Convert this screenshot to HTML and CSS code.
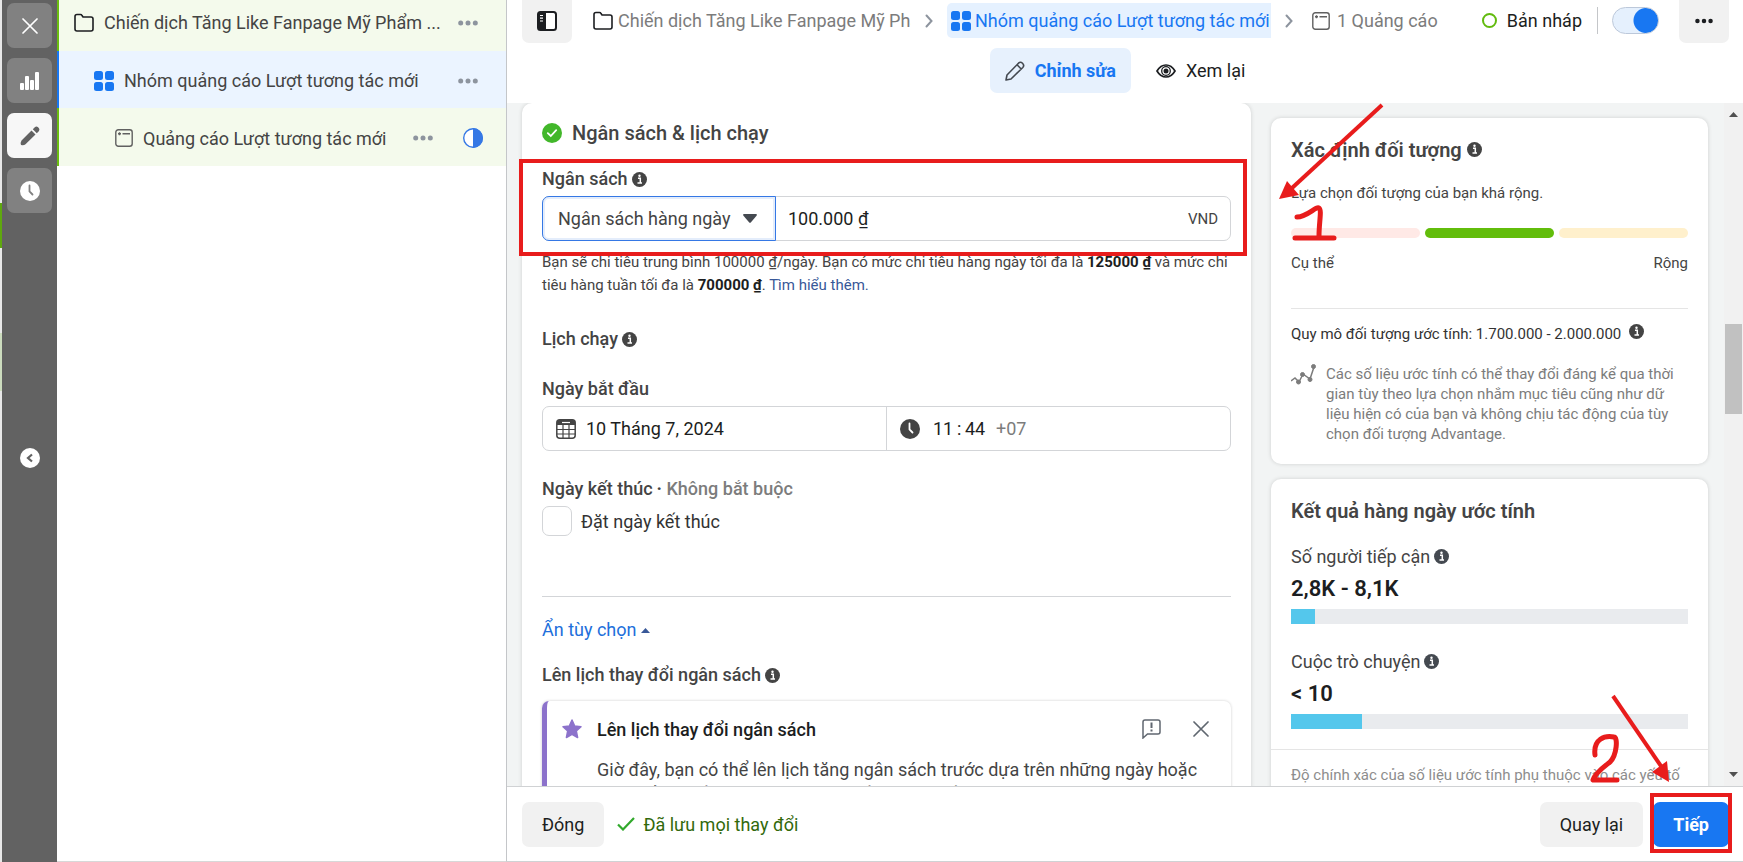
FILE: index.html
```
<!DOCTYPE html>
<html lang="vi">
<head>
  <meta charset="UTF-8">
  <meta name="viewport" content="width=device-width, initial-scale=1.0">
  <title>Nhóm quảng cáo Lượt tương tác mới</title>
  <link rel="stylesheet" href="styles.css">
</head>
<body>
  <!-- shared icons -->
  <svg class="defs" width="0" height="0" aria-hidden="true">
    <symbol id="i-folder" viewBox="0 0 20 20"><path d="M1 4V3.500Q1 1.500 3 1.500H6.500Q7.500 1.500 8 2.500L9 4H17Q19 4 19 6V16Q19 18 17 18H3Q1 18 1 16Z" fill="none" stroke="currentColor" stroke-width="1.600"/></symbol>
    <symbol id="i-grid" viewBox="0 0 20 20"><g fill="currentColor"><rect width="9" height="9" rx="2.500"/><rect x="11" width="9" height="9" rx="2.500"/><rect y="11" width="9" height="9" rx="2.500"/><rect x="11" y="11" width="9" height="9" rx="2.500"/></g></symbol>
    <symbol id="i-ad" viewBox="0 0 18 18"><rect x=".8" y=".8" width="16.400" height="16.400" rx="2.500" fill="none" stroke="currentColor" stroke-width="1.400"/><path d="M3 4.800H6M4.500 3.300V6.300M7.500 4.800H15" stroke="currentColor" stroke-width="1.400"/></symbol>
    <symbol id="i-dots" viewBox="0 0 20 6"><g fill="currentColor"><circle cx="2.700" cy="3" r="2.500"/><circle cx="10" cy="3" r="2.500"/><circle cx="17.300" cy="3" r="2.500"/></g></symbol>
    <symbol id="i-info" viewBox="0 0 15 15"><circle cx="7.500" cy="7.500" r="7.500" fill="currentColor"/><path d="M6 6.200H8.300V11M5.500 11H10" fill="none" stroke="#fff" stroke-width="1.500"/><circle cx="7.500" cy="3.700" r="1.200" fill="#fff"/></symbol>
    <symbol id="i-clock" viewBox="0 0 20 20"><circle cx="10" cy="10" r="10" fill="currentColor"/><path d="M9.500 4.500V10.500L12.500 13.500" fill="none" stroke="var(--hand, #fff)" stroke-width="1.800" stroke-linecap="round"/></symbol>
    <symbol id="i-x" viewBox="0 0 16 16"><path d="M1 1 15 15M15 1 1 15" stroke="currentColor" stroke-width="1.700" stroke-linecap="round"/></symbol>
    <symbol id="i-chevron" viewBox="0 0 8 14"><path d="M1.500 1.500 6.500 7 1.500 12.500" fill="none" stroke="currentColor" stroke-width="2" stroke-linecap="round"/></symbol>
  </svg>

  <div class="app">
    <div class="page-edge"></div>

    <nav class="rail">
      <button class="rail-btn" aria-label="Đóng"><svg width="16" height="16"><use href="#i-x"/></svg></button>
      <button class="rail-btn" aria-label="Biểu đồ">
        <svg width="19" height="18" viewBox="0 0 19 18" fill="currentColor"><rect y="11" width="4" height="7" rx="1"/><rect x="5" y="4" width="4" height="14" rx="1"/><rect x="10" y="8" width="4" height="10" rx="1"/><rect x="15" width="4" height="18" rx="1"/></svg>
      </button>
      <button class="rail-btn active" aria-label="Chỉnh sửa">
        <svg width="20" height="20" viewBox="0 0 20 20" fill="currentColor"><path d="M1 19Q0 17 1.500 14.500L11.500 4.500 15.500 8.500 5.500 18.200Q4 19.500 1 19ZM12.800 3.200 14.800 1.200Q16.300 0 17.800 1L19 2.200Q20 3.700 18.800 5.200L16.800 7.200Z"/></svg>
      </button>
      <button class="rail-btn" aria-label="Lịch sử"><svg width="20" height="20"><use href="#i-clock"/></svg></button>
      <button class="rail-collapse" aria-label="Thu gọn">
        <svg width="20" height="20" viewBox="0 0 20 20"><circle cx="10" cy="10" r="10" fill="#fff"/><path d="M12 6.500 8 10 12 13.500" fill="none" stroke="#626262" stroke-width="2.200"/></svg>
      </button>
    </nav>

    <aside class="tree">
      <div class="tree-row">
        <svg class="ink" width="20" height="20"><use href="#i-folder"/></svg>
        <span class="tree-name">Chiến dịch Tăng Like Fanpage Mỹ Phẩm ...</span>
        <button class="dots" aria-label="Thêm"><svg width="20" height="6"><use href="#i-dots"/></svg></button>
      </div>
      <div class="tree-row level-2 selected">
        <svg class="blue" width="20" height="20"><use href="#i-grid"/></svg>
        <span class="tree-name">Nhóm quảng cáo Lượt tương tác mới</span>
        <button class="dots" aria-label="Thêm"><svg width="20" height="6"><use href="#i-dots"/></svg></button>
      </div>
      <div class="tree-row level-3">
        <svg class="ad-icon" width="18" height="18"><use href="#i-ad"/></svg>
        <span class="tree-name">Quảng cáo Lượt tương tác mới</span>
        <button class="dots" aria-label="Thêm"><svg width="20" height="6"><use href="#i-dots"/></svg></button>
        <svg class="half" width="20" height="20" viewBox="0 0 20 20"><circle cx="10" cy="10" r="9.300" fill="#fff" stroke="#3578e5" stroke-width="1.400"/><path d="M10 0A10 10 0 0 1 10 20Z" fill="#3578e5"/></svg>
      </div>
    </aside>

    <main class="editor">
      <header class="topbar">
        <div class="crumbs">
          <button class="square-btn" aria-label="Bảng điều hướng">
            <svg width="20" height="20" viewBox="0 0 20 20"><rect x="1" y="1" width="18" height="18" rx="2.500" fill="#fff" stroke="#1c1e21" stroke-width="2"/><path d="M1 1H9V19H1Z" fill="#1c1e21"/><path d="M3 4.500H6M3 7.200H6M3 10H6" stroke="#fff" stroke-width="1.200"/></svg>
          </button>
          <a class="crumb first" href="#"><svg class="ink" width="20" height="20"><use href="#i-folder"/></svg><span class="crumb-text">Chiến dịch Tăng Like Fanpage Mỹ Phẩm</span></a>
          <svg class="sep" width="8" height="14"><use href="#i-chevron"/></svg>
          <a class="crumb current" href="#"><svg width="20" height="20"><use href="#i-grid"/></svg><span class="crumb-text">Nhóm quảng cáo Lượt tương tác mới</span></a>
          <svg class="sep" width="8" height="14"><use href="#i-chevron"/></svg>
          <a class="crumb last" href="#"><svg class="ad-icon" width="18" height="18"><use href="#i-ad"/></svg><span class="crumb-text">1 Quảng cáo</span></a>
          <span class="status"><i class="ring"></i>Bản nháp</span>
          <label class="toggle"><input type="checkbox" checked aria-label="Bật nhóm quảng cáo"></label>
          <button class="square-btn" aria-label="Thêm"><svg width="18" height="6"><use href="#i-dots"/></svg></button>
        </div>
        <div class="tabs">
          <button class="tab active">
            <svg width="20" height="20" viewBox="0 0 20 20" fill="none" stroke="#444950" stroke-width="1.600" stroke-linejoin="round"><path d="M1 19 2 14 13.500 2.200Q15.500 .3 17.500 2.300 19.700 4.500 17.800 6.500L6 18ZM12 3.800 16.200 8"/></svg>
            Chỉnh sửa
          </button>
          <button class="tab">
            <svg width="20" height="14" viewBox="0 0 20 14"><path d="M1 7Q4.500 1 10 1T19 7Q15.500 13 10 13T1 7Z" fill="none" stroke="#1c1e21" stroke-width="1.700"/><circle cx="10" cy="7" r="4.300" fill="none" stroke="#1c1e21" stroke-width="1.300"/><circle cx="10" cy="7" r="2.500" fill="#1c1e21"/></svg>
            Xem lại
          </button>
        </div>
      </header>

      <div class="workspace">
        <section class="card form-card">
          <h2 class="section-title">
            <svg width="20" height="20" viewBox="0 0 20 20"><circle cx="10" cy="10" r="10" fill="#42b72a"/><path d="M5.800 10.200 8.800 13 14.200 7.200" fill="none" stroke="#fff" stroke-width="1.800" stroke-linecap="round"/></svg>
            Ngân sách &amp; lịch chạy
          </h2>

          <label class="field-label budget-label" for="budget-type">Ngân sách <svg width="15" height="15"><use href="#i-info"/></svg></label>
          <div class="budget">
            <div class="select-wrap">
              <select id="budget-type">
                <option>Ngân sách hàng ngày</option>
                <option>Ngân sách trọn đời</option>
              </select>
              <svg width="14" height="9" viewBox="0 0 14 9"><path d="M1 0H13Q14.500 .3 13.500 1.700L8 8.300Q7 9.300 6 8.300L.5 1.700Q-.5 .3 1 0Z" fill="#444950"/></svg>
            </div>
            <input id="budget-value" type="text" value="100.000 ₫" aria-label="Số tiền">
            <span class="unit">VND</span>
          </div>
          <p class="hint">Bạn sẽ chi tiêu trung bình 100000 ₫/ngày. Bạn có mức chi tiêu hàng ngày tối đa là <b>125000 ₫</b> và mức chi tiêu hàng tuần tối đa là <b>700000 ₫</b>. <a href="#">Tìm hiểu thêm.</a></p>

          <h3 class="field-label schedule-label">Lịch chạy <svg width="15" height="15"><use href="#i-info"/></svg></h3>

          <label class="field-label start-label" for="start-date">Ngày bắt đầu</label>
          <div class="datetime">
            <div class="date-part">
              <svg width="20" height="20" viewBox="0 0 20 20"><rect x=".8" y=".8" width="18.400" height="18.400" rx="3" fill="#fff" stroke="#444" stroke-width="1.500"/><path d="M1 6V3Q1 1 3 1H17Q19 1 19 3V6Z" fill="#444"/><path d="M6 3.500H14" stroke="#fff" stroke-width="1.200"/><path d="M1 10.500H19M1 15H19M7 6V19M13 6V19" stroke="#444" stroke-width="1.200"/></svg>
              <input id="start-date" type="text" value="10 Tháng 7, 2024">
            </div>
            <div class="time-part">
              <svg class="ink-soft" width="20" height="20"><use href="#i-clock"/></svg>
              <input type="text" value="11&thinsp;:&thinsp;44" aria-label="Giờ bắt đầu">
              <span class="zone">+07</span>
            </div>
          </div>

          <h3 class="field-label end-label">Ngày kết thúc <span class="optional"><b>·</b> Không bắt buộc</span></h3>
          <label class="check"><input type="checkbox">Đặt ngày kết thúc</label>

          <a class="toggle-options" href="#">Ẩn tùy chọn <svg width="9" height="5" viewBox="0 0 9 5"><path d="M0 5 4.500 0 9 5Z" fill="#385898"/></svg></a>

          <h3 class="field-label change-label">Lên lịch thay đổi ngân sách <svg width="15" height="15"><use href="#i-info"/></svg></h3>
          <div class="notice">
            <svg class="star" width="20" height="20" viewBox="0 0 20 20"><path d="M10 1 12.700 7 19 7.700 14.300 12 15.600 18.500 10 15.300 4.400 18.500 5.700 12 1 7.700 7.300 7Z" fill="#8c72cb" stroke="#8c72cb" stroke-width="1.500" stroke-linejoin="round"/></svg>
            <div class="notice-body">
              <div class="notice-head">
                <h4>Lên lịch thay đổi ngân sách</h4>
                <button aria-label="Phản hồi"><svg width="19" height="20" viewBox="0 0 19 20" fill="none" stroke="#606770" stroke-width="1.500"><path d="M1 19V3Q1 1 3 1H16Q18 1 18 3V13Q18 15 16 15H5.500Z"/><path d="M9.500 3.500V9M9.500 10.500V12.500" stroke-width="2"/></svg></button>
                <button aria-label="Đóng"><svg width="16" height="16"><use href="#i-x"/></svg></button>
              </div>
              <p>Giờ đây, bạn có thể lên lịch tăng ngân sách trước dựa trên những ngày hoặc thời điểm nhất định mà bạn dự kiến sẽ có nhiều cơ hội bán hàng, lượng người truy cập cao hơn.</p>
            </div>
          </div>
        </section>

        <aside class="side">
          <section class="card audience">
            <h2 class="card-title">Xác định đối tượng <svg width="15" height="15"><use href="#i-info"/></svg></h2>
            <p class="small">Lựa chọn đối tượng của bạn khá rộng.</p>
            <div class="meter"><span class="narrow"></span><span class="good"></span><span class="broad"></span></div>
            <div class="meter-labels"><span>Cụ thể</span><span>Rộng</span></div>
            <p class="small estimate">Quy mô đối tượng ước tính: 1.700.000 - 2.000.000 <svg width="15" height="15"><use href="#i-info"/></svg></p>
            <div class="note">
              <svg width="25" height="22" viewBox="0 0 25 22" fill="#7c7c7c" stroke="#7c7c7c"><path d="M0 17 4 14 8 18 12 10 19 15 23 3" fill="none" stroke-width="1.500"/><circle cx="7.500" cy="18" r="2"/><circle cx="11.500" cy="10.500" r="2"/><circle cx="19" cy="15.500" r="2"/><circle cx="22.500" cy="2.500" r="2"/></svg>
              <p>Các số liệu ước tính có thể thay đổi đáng kể qua thời gian tùy theo lựa chọn nhắm mục tiêu cũng như dữ liệu hiện có của bạn và không chịu tác động của tùy chọn đối tượng Advantage.</p>
            </div>
          </section>

          <section class="card results">
            <h2 class="card-title">Kết quả hàng ngày ước tính</h2>
            <div class="metric">
              <div class="metric-name">Số người tiếp cận <svg width="15" height="15"><use href="#i-info"/></svg></div>
              <div class="metric-value">2,8K - 8,1K</div>
              <div class="bar"><div class="fill" style="width: 6%"></div></div>
            </div>
            <div class="metric">
              <div class="metric-name">Cuộc trò chuyện <svg width="15" height="15"><use href="#i-info"/></svg></div>
              <div class="metric-value">&lt; 10</div>
              <div class="bar"><div class="fill" style="width: 18%"></div></div>
            </div>
            <p class="accuracy">Độ chính xác của số liệu ước tính phụ thuộc vào các yếu tố như dữ liệu về chiến dịch trước đây.</p>
          </section>
        </aside>

        <div class="scrollbar">
          <svg width="9" height="5" viewBox="0 0 9 5"><path d="M0 5 4.500 0 9 5Z" fill="#505050"/></svg>
          <div class="thumb"></div>
          <svg width="9" height="5" viewBox="0 0 9 5"><path d="M0 0 4.500 5 9 0Z" fill="#505050"/></svg>
        </div>
      </div>

      <footer class="footer">
        <button class="btn">Đóng</button>
        <span class="saved"><svg width="18" height="14" viewBox="0 0 18 14"><path d="M1 7.500 6 12.500 17 1" fill="none" stroke="#31a92c" stroke-width="2.200"/></svg>Đã lưu mọi thay đổi</span>
        <button class="btn back">Quay lại</button>
        <button class="btn primary">Tiếp</button>
      </footer>
    </main>
  </div>

  <!-- step markers drawn over the page -->
  <div class="mark-box mark-budget"></div>
  <div class="mark-box mark-next"></div>
  <svg class="mark mark-1" width="110" height="142" viewBox="0 0 110 142" fill="none" stroke="#e81c1c" aria-label="1">
    <path d="M105 3 15 86" stroke-width="4"/>
    <path d="M2 97 10 79 22 93Z" fill="#e81c1c" stroke="none"/>
    <path d="M20 115C30 115 39 104 42 106S42 120 42 134M18 136H57" stroke-width="5" stroke-linecap="round" stroke-linejoin="round"/>
  </svg>
  <svg class="mark mark-2" width="90" height="96" viewBox="0 0 90 96" fill="none" stroke="#e81c1c" aria-label="2">
    <path d="M28 3 78 76" stroke-width="4"/>
    <path d="M84 89 67 79 82 68Z" fill="#e81c1c" stroke="none"/>
    <path d="M10 62C8 46 20 42 29 44 33 44 32 62 25 69 20 73 10 80 8 87H32" stroke-width="5" stroke-linecap="round" stroke-linejoin="round"/>
  </svg>
</body>
</html>
```
FILE: styles.css
```
* {
  box-sizing: border-box;
}

body {
  margin: 0;
  height: 100vh;
  overflow: hidden;
  position: relative;
  font-family: Roboto, "Liberation Sans", sans-serif;
  font-size: 18px;
  color: #1c1e21;
  background: #fff;
}

h2, h3, h4, p {
  margin: 0;
}

button, input, select {
  font: inherit;
  color: inherit;
}

button {
  border: none;
  padding: 0;
  background: none;
  cursor: pointer;
}

a {
  text-decoration: none;
}

svg {
  flex: none;
}

.defs {
  position: absolute;
}

.ink { color: #1c1e21; }
.ink-soft { color: #444; }
.blue { color: #1877f2; }
.ad-icon { color: #606060; }

.app {
  display: flex;
  height: 100%;
}

.page-edge {
  width: 2px;
  background: linear-gradient(#e8e8e8 203px, #5fa80e 203px, #5fa80e 248px, #e8e8e8 248px, #e8e8e8 333px, #ccdcbe 333px, #ccdcbe 391px, #e8e8e8 391px);
}

/* dark rail */
.rail {
  width: 55px;
  padding-top: 3px;
  display: flex;
  flex-direction: column;
  align-items: center;
  gap: 10px;
  background: #626262;
}

.rail-btn {
  width: 45px;
  height: 45px;
  display: flex;
  align-items: center;
  justify-content: center;
  border-radius: 7px;
  background: #818181;
  color: #fff;
  --hand: #818181;
}

.rail-btn.active {
  background: #f7f7f7;
  color: #626262;
}

.rail-collapse {
  height: 20px;
  margin-top: 225px;
}

/* campaign tree */
.tree {
  width: 450px;
  border-right: 1px solid #c4c6c9;
  border-bottom: 1px solid #d8d8d8;
}

.tree-row {
  height: 57px;
  display: flex;
  align-items: center;
  gap: 10px;
  padding: 2px 28px 0 15px;
  border-left: 2px solid #6bbd11;
  background: #f4faec;
  color: #444;
}

.tree-row:first-child {
  height: 51px;
  padding-top: 0;
  padding-bottom: 6px;
}

.tree-row.level-2 { padding-left: 35px; }

.tree-row.level-3 {
  height: 58px;
  padding-left: 56px;
  padding-right: 23px;
}

.tree-row.selected {
  border-left-color: #1877f2;
  background: #ebf4ff;
}

.tree-name {
  flex: 1;
  white-space: nowrap;
}

.dots {
  display: flex;
  color: #8d949e;
}

.half {
  margin-left: 20px;
}

/* editor */
.editor {
  flex: 1;
  min-width: 0;
  display: flex;
  flex-direction: column;
}

.topbar {
  height: 103px;
  background: #fff;
}

.crumbs {
  height: 43px;
  display: flex;
  align-items: center;
  padding: 0 14px 2px 15px;
  white-space: nowrap;
}

.square-btn {
  width: 50px;
  height: 45px;
  display: flex;
  align-items: center;
  justify-content: center;
  border-radius: 0 0 7px 7px;
  background: #f1f1f1;
}

.crumb {
  height: 35px;
  display: flex;
  align-items: center;
  gap: 5px;
  color: #7c7c7c;
}

.crumb.first {
  width: 318px;
  margin-left: 21px;
}

.crumb-text {
  overflow: hidden;
  line-height: 30px;
}

.crumb.current {
  width: 324px;
  gap: 4px;
  padding-left: 4px;
  border-radius: 5px 0 0 5px;
  background: #e5f1ff;
  color: #1877f2;
}

.crumb.last {
  gap: 7px;
  margin-left: 5px;
}

.sep {
  margin: 0 14px;
  color: #8d949e;
}

.status {
  display: flex;
  align-items: center;
  gap: 10px;
  height: 27px;
  margin-left: auto;
  padding-right: 15px;
  border-right: 1px solid #c4c6c9;
}

.ring {
  width: 15px;
  height: 15px;
  border: 2px solid #62bb0e;
  border-radius: 50%;
}

.toggle {
  display: flex;
  margin: 0 20px 0 14px;
}

.toggle input {
  appearance: none;
  width: 47px;
  height: 27px;
  margin: 0;
  border: 1px solid #bcc8da;
  border-radius: 14px;
  background: radial-gradient(circle at 33px 50%, #1877f2 12px, #e5f0fd 13px);
}

.tabs {
  display: flex;
  justify-content: center;
  gap: 10px;
  margin-top: 5px;
}

.tab {
  height: 45px;
  display: flex;
  align-items: center;
  gap: 10px;
  padding: 0 15px;
  border-radius: 7px;
}

.tab.active {
  background: #e7f1fd;
  color: #1877f2;
  font-weight: 700;
}

.workspace {
  flex: 1;
  min-height: 0;
  display: flex;
  gap: 20px;
  padding-left: 15px;
  overflow: hidden;
  background: #f2f4f4;
}

.card {
  border-radius: 10px;
  background: #fff;
  box-shadow: 0 0 4px rgba(0, 0, 0, 0.15);
}

.form-card {
  flex: 1;
  min-width: 0;
  height: max-content;
  padding: 18px 20px;
}

.section-title {
  display: flex;
  align-items: center;
  gap: 10px;
  line-height: 24px;
  font-size: 20px;
  font-weight: 500;
  color: #444;
}

.field-label {
  display: flex;
  align-items: center;
  gap: 4px;
  line-height: 24px;
  font-size: 18px;
  font-weight: 500;
  color: #444;
}

.budget-label {
  margin-top: 22px;
}

.budget {
  display: flex;
  align-items: center;
  height: 45px;
  margin-top: 5px;
  border: 1px solid #d3d5d8;
  border-radius: 7px;
}

.select-wrap {
  position: relative;
  width: 234px;
  height: 45px;
  margin-left: -1px;
}

.select-wrap select {
  appearance: none;
  width: 100%;
  height: 100%;
  padding: 0 15px;
  border: 1px solid #3578e5;
  border-radius: 7px 0 0 7px;
  box-shadow: inset 0 0 0 2px #e4edfb;
  background: #fff;
  color: #444;
}

.select-wrap svg {
  position: absolute;
  right: 19px;
  top: 18px;
  pointer-events: none;
}

.budget input {
  flex: 1;
  min-width: 0;
  padding: 0 12px;
  border: none;
  background: none;
}

.unit {
  padding-right: 12px;
  font-size: 15px;
  color: #444;
}

.hint {
  margin-top: 10px;
  line-height: 23px;
  font-size: 15px;
  color: #444;
}

.hint b {
  color: #1c1e21;
}

.hint a {
  color: #385898;
}

.schedule-label { margin-top: 30px; }
.start-label { margin-top: 26px; }

.datetime {
  display: flex;
  height: 45px;
  margin-top: 5px;
  border: 1px solid #d3d5d8;
  border-radius: 7px;
}

.date-part,
.time-part {
  flex: 1;
  min-width: 0;
  display: flex;
  align-items: center;
  gap: 10px;
  padding-left: 13px;
}

.time-part {
  border-left: 1px solid #d3d5d8;
}

.datetime input {
  width: 200px;
  padding: 0;
  border: none;
}

.time-part input {
  width: 56px;
  padding-left: 3px;
}

.zone {
  color: #7c7c7c;
}

.end-label {
  margin-top: 26px;
}

.optional {
  color: #7c7c7c;
}

.optional b {
  color: #444;
}

.check {
  display: flex;
  align-items: center;
  gap: 9px;
  margin-top: 5px;
  padding-bottom: 60px;
  border-bottom: 1px solid #d3d5d8;
  color: #333;
}

.check input {
  appearance: none;
  width: 30px;
  height: 30px;
  margin: 0;
  border: 1px solid #d3d5d8;
  border-radius: 7px;
}

.toggle-options {
  display: flex;
  align-items: center;
  gap: 5px;
  margin-top: 21px;
  line-height: 24px;
  color: #216fdb;
}

.change-label {
  margin-top: 21px;
}

.notice {
  display: flex;
  gap: 15px;
  margin-top: 14px;
  padding: 14px 22px 14px 15px;
  border-left: 5px solid #8c72cb;
  border-radius: 7px;
  box-shadow: 0 0 3px rgba(0, 0, 0, 0.2);
}

.star {
  margin-top: 4px;
}

.notice-body {
  flex: 1;
}

.notice-head {
  display: flex;
  align-items: center;
  gap: 32px;
  height: 28px;
  color: #606770;
}

.notice-head h4 {
  flex: 1;
  font-weight: 500;
  color: #1c1e21;
}

.notice-head button {
  display: flex;
}

.notice p {
  margin-top: 14px;
  line-height: 25px;
  color: #444;
}

/* right column */
.side {
  width: 437px;
  padding-top: 15px;
  color: #444;
}

.audience {
  padding: 20px;
  margin-bottom: 15px;
}

.card-title {
  line-height: 24px;
  font-size: 20px;
  font-weight: 600;
}

.small {
  margin-top: 21px;
  line-height: 20px;
  font-size: 15px;
}

.meter {
  display: flex;
  gap: 5px;
  margin-top: 25px;
}

.meter span {
  flex: 1;
  height: 10px;
  border-radius: 5px;
}

.meter .narrow { background: #ffe9e6; }
.meter .good { background: #62bd0b; }
.meter .broad { background: #fff0cc; }

.meter-labels {
  display: flex;
  justify-content: space-between;
  padding: 15px 0 35px;
  border-bottom: 1px solid #e5e5e5;
  line-height: 20px;
  font-size: 15px;
}

.estimate {
  margin-top: 15px;
  color: #333;
}

.estimate svg {
  margin-left: 4px;
  color: #444;
}

.note {
  display: flex;
  gap: 10px;
  margin-top: 20px;
  line-height: 20px;
  font-size: 15px;
  color: #7c7c7c;
}

.results {
  padding: 20px 0;
}

.results .card-title,
.metric {
  padding: 0 20px;
}

.metric {
  margin-top: 21px;
}

.metric-name {
  display: flex;
  align-items: center;
  gap: 4px;
  line-height: 25px;
}

.metric-name svg {
  color: #444950;
}

.metric-value {
  margin: 6px 0 7px;
  line-height: 27px;
  font-size: 22px;
  font-weight: 600;
  color: #1c1e21;
}

.bar {
  height: 15px;
  background: #e9ebee;
}

.metric + .metric {
  margin-top: 25px;
}

.fill {
  height: 15px;
  background: #54c7ec;
}

.accuracy {
  margin-top: 20px;
  padding: 15px 20px;
  border-top: 1px solid #e5e5e5;
  line-height: 20px;
  font-size: 15px;
  color: #8d8d8d;
}

.scrollbar {
  width: 19px;
  margin-left: -4px;
  padding: 9px 0;
  display: flex;
  flex-direction: column;
  align-items: center;
  background: #f1f1f1;
}

.thumb {
  width: 17px;
  height: 90px;
  margin: 207px 0 auto;
  background: #c1c1c1;
}

.footer {
  height: 76px;
  display: flex;
  align-items: center;
  padding: 0 14px 0 15px;
  border-top: 1px solid #d0d2d4;
  border-bottom: 1px solid #d0d2d4;
  background: #fff;
}

.btn {
  height: 45px;
  padding: 0 20px;
  border-radius: 7px;
  background: #f1f1f1;
}

.btn.primary {
  margin-left: 10px;
  background: #1877f2;
  color: #fff;
  font-weight: 700;
}

.saved {
  display: flex;
  align-items: center;
  gap: 8px;
  margin: 0 auto 0 13px;
  color: #32690b;
}

/* red step markers */
.mark,
.mark-box {
  position: absolute;
  pointer-events: none;
}

.mark-box {
  border: 4px solid #e81c1c;
}

.mark-budget {
  left: 519px;
  top: 159px;
  right: 496px;
  height: 97px;
}

.mark-next {
  right: 11px;
  bottom: 9px;
  width: 82px;
  height: 60px;
}

.mark-1 {
  right: 356px;
  top: 102px;
}

.mark-2 {
  right: 68px;
  bottom: 73px;
}
```
